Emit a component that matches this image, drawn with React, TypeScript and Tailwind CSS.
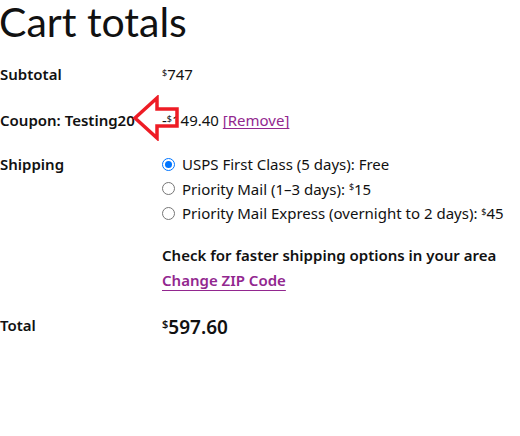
import React from "react";

const Radio = ({ checked }: { checked?: boolean }) => (
  <span
    className={
      "inline-flex items-center justify-center w-[13px] h-[13px] rounded-full border mr-[7px] shrink-0 " +
      (checked ? "border-[#0075ff]" : "border-[#767676]")
    }
  >
    {checked && <span className="w-[7px] h-[7px] rounded-full bg-[#0075ff]" />}
  </span>
);

export default function App() {
  return (
    <div className="relative w-[520px] h-[436px] bg-white text-[#111] [font-family:'Noto_Sans',sans-serif] text-[15px]">
      <h1 className="[font-family:Lato,sans-serif] text-[41px] leading-[44px] font-normal text-[#111] -ml-[1px]">
        Cart totals
      </h1>
      <div className="grid grid-cols-[162px_1fr] mt-[19px]">
        <div className="font-semibold leading-[22px]">Subtotal</div>
        <div className="leading-[22px]">
          <sup className="text-[9px]">$</sup>747
        </div>

        <div className="font-semibold leading-[22px] mt-[24px]">Coupon: Testing20</div>
        <div className="leading-[22px] mt-[24px]">
          -<sup className="text-[9px]">$</sup>149.40{" "}
          <a className="text-[#92278f] underline underline-offset-2">[Remove]</a>
        </div>

        <div className="font-semibold leading-[22px] mt-[22px]">Shipping</div>
        <div className="mt-[22px]">
          <div className="flex items-center leading-[22px] h-[24.5px] -mt-[1px]">
            <Radio checked />
            <span>USPS First Class (5 days): Free</span>
          </div>
          <div className="flex items-center leading-[22px] h-[24.5px]">
            <Radio />
            <span>
              Priority Mail (1–3 days): <sup className="text-[9px]">$</sup>15
            </span>
          </div>
          <div className="flex items-center leading-[22px] h-[24.5px]">
            <Radio />
            <span>
              Priority Mail Express (overnight to 2 days): <sup className="text-[9px]">$</sup>45
            </span>
          </div>
          <div className="font-semibold leading-[22px] mt-[18px]">
            Check for faster shipping options in your area
          </div>
          <a className="block w-fit font-semibold leading-[22px] mt-[3px] text-[#92278f] underline underline-offset-4">
            Change ZIP Code
          </a>
        </div>

        <div className="font-semibold leading-[22px] mt-[23px]">Total</div>
        <div className="font-semibold text-[19px] leading-[26px] mt-[23px]">
          <sup className="text-[11px]">$</sup>597.60
        </div>
      </div>

      <svg
        className="absolute left-[132px] top-[95px]"
        width="50"
        height="46"
        viewBox="0 0 50 46"
      >
        <path
          d="M3 23 L25 3 L25 14 L45 14 L45 31 L25 31 L25 43 Z"
          fill="none"
          stroke="#ee1c25"
          strokeWidth="3.5"
          strokeLinejoin="miter"
        />
      </svg>
    </div>
  );
}
